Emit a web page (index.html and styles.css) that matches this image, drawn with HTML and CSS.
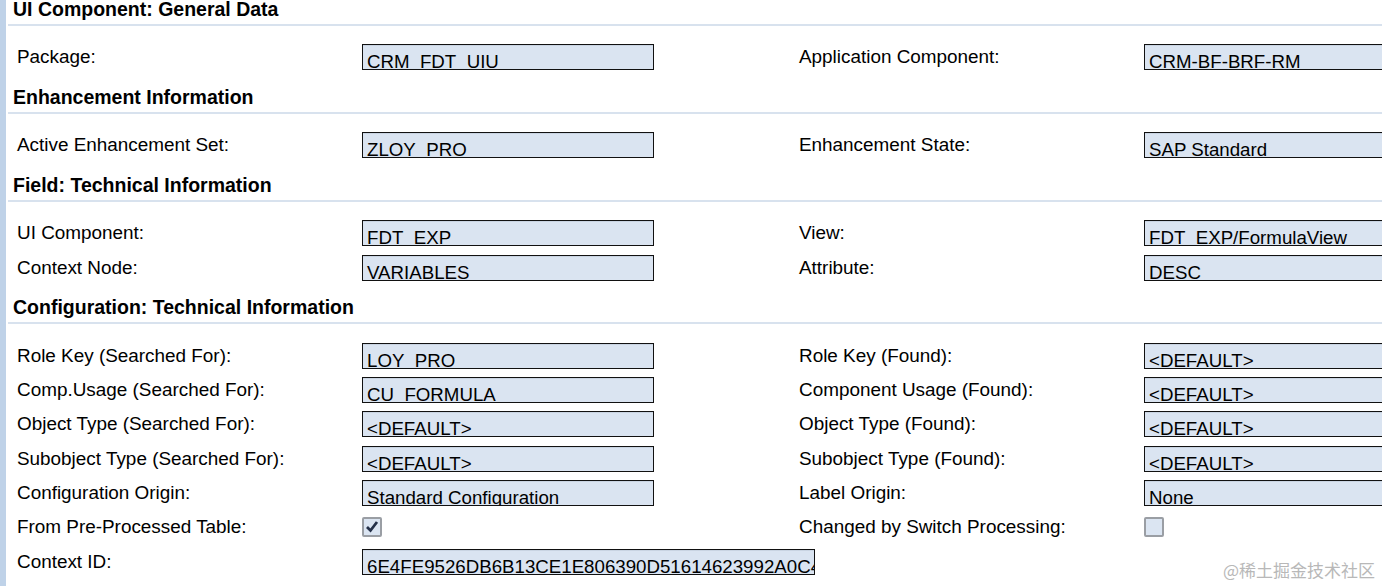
FILE: index.html
```html
<!DOCTYPE html>
<html>
<head>
<meta charset="utf-8">
<link rel="stylesheet" href="styles.css">
</head>
<body>
<div class="strip"></div>
<main class="main">
  <section class="section">
    <h2 class="section-title">UI Component: General Data</h2>
    <div class="form">
      <div class="label">Package:</div>
      <div class="field"><span>CRM_FDT_UIU</span></div>
      <div class="spacer"></div>
      <div class="label">Application Component:</div>
      <div class="field"><span>CRM-BF-BRF-RM</span></div>
    </div>
  </section>
  <section class="section">
    <h2 class="section-title">Enhancement Information</h2>
    <div class="form">
      <div class="label">Active Enhancement Set:</div>
      <div class="field"><span>ZLOY_PRO</span></div>
      <div class="spacer"></div>
      <div class="label">Enhancement State:</div>
      <div class="field"><span>SAP Standard</span></div>
    </div>
  </section>
  <section class="section">
    <h2 class="section-title">Field: Technical Information</h2>
    <div class="form">
      <div class="label">UI Component:</div>
      <div class="field"><span>FDT_EXP</span></div>
      <div class="spacer"></div>
      <div class="label">View:</div>
      <div class="field"><span>FDT_EXP/FormulaView</span></div>

      <div class="label">Context Node:</div>
      <div class="field"><span>VARIABLES</span></div>
      <div class="spacer"></div>
      <div class="label">Attribute:</div>
      <div class="field"><span>DESC</span></div>
    </div>
  </section>
  <section class="section">
    <h2 class="section-title">Configuration: Technical Information</h2>
    <div class="form">
      <div class="label">Role Key (Searched For):</div>
      <div class="field"><span>LOY_PRO</span></div>
      <div class="spacer"></div>
      <div class="label">Role Key (Found):</div>
      <div class="field"><span>&lt;DEFAULT&gt;</span></div>

      <div class="label">Comp.Usage (Searched For):</div>
      <div class="field"><span>CU_FORMULA</span></div>
      <div class="spacer"></div>
      <div class="label">Component Usage (Found):</div>
      <div class="field"><span>&lt;DEFAULT&gt;</span></div>

      <div class="label">Object Type (Searched For):</div>
      <div class="field"><span>&lt;DEFAULT&gt;</span></div>
      <div class="spacer"></div>
      <div class="label">Object Type (Found):</div>
      <div class="field"><span>&lt;DEFAULT&gt;</span></div>

      <div class="label">Subobject Type (Searched For):</div>
      <div class="field"><span>&lt;DEFAULT&gt;</span></div>
      <div class="spacer"></div>
      <div class="label">Subobject Type (Found):</div>
      <div class="field"><span>&lt;DEFAULT&gt;</span></div>

      <div class="label">Configuration Origin:</div>
      <div class="field"><span>Standard Configuration</span></div>
      <div class="spacer"></div>
      <div class="label">Label Origin:</div>
      <div class="field"><span>None</span></div>

      <div class="label">From Pre-Processed Table:</div>
      <div class="check-cell"><span class="checkbox"><svg width="16" height="16" viewBox="0 0 16 16"><path d="M3 8 L6.5 11.5 L13 3" fill="none" stroke="#243049" stroke-width="2.8" stroke-linejoin="miter" stroke-linecap="butt"/></svg></span></div>
      <div class="spacer"></div>
      <div class="label">Changed by Switch Processing:</div>
      <div class="check-cell"><span class="checkbox"></span></div>

      <div class="label">Context ID:</div>
      <div class="field field-wide"><span>6E4FE9526DB6B13CE1E806390D51614623992A0C4F1E</span></div>
    </div>
  </section>
</main>
<div class="watermark">@稀土掘金技术社区</div>
</body>
</html>
```

FILE: styles.css
```css
html, body {
  margin: 0;
  padding: 0;
  width: 1382px;
  height: 586px;
  overflow: hidden;
  background: #ffffff;
}

body {
  display: flex;
  align-items: stretch;
  font-family: "Liberation Sans", Arial, sans-serif;
  color: #000000;
  position: relative;
}

.strip {
  flex: none;
  width: 6px;
  background: #bfd2e8;
}

.main {
  flex: 1;
  margin-left: 2px;
  min-width: 0;
}

.section-title {
  margin: 0;
  height: 24px;
  line-height: 19px;
  padding-left: 5px;
  font-size: 19.5px;
  font-weight: bold;
  border-bottom: 2px solid #d8e2ee;
  white-space: nowrap;
}

.form {
  display: grid;
  grid-template-columns: 345px 292px 145px 345px 292px;
  grid-auto-rows: 34.33px;
  align-items: center;
  padding: 14.2px 0 13.47px 9px;
  font-size: 18.7px;
}

.label {
  white-space: nowrap;
  font-size: 18.9px;
}

.field {
  box-sizing: border-box;
  height: 26px;
  border: 1px solid #111111;
  background: #dae4f1;
  box-shadow: inset 0 1px 0 #c9d4e2;
  padding-left: 4px;
  overflow: hidden;
  white-space: nowrap;
  line-height: 34px;
}

.field-wide {
  grid-column: 2 / span 2;
  width: 453px;
}

.check-cell {
  display: flex;
  align-items: center;
}

.checkbox {
  box-sizing: border-box;
  width: 20px;
  height: 20px;
  border: 2px solid #9a9ea4;
  border-radius: 2px;
  background: #dbe5f2;
  display: flex;
  align-items: center;
  justify-content: center;
}

.watermark {
  position: absolute;
  right: 7px;
  bottom: 6px;
  font-family: "Noto Sans CJK SC", sans-serif;
  font-size: 17px;
  line-height: 20px;
  color: #b8b8b8;
  white-space: nowrap;
}
```
